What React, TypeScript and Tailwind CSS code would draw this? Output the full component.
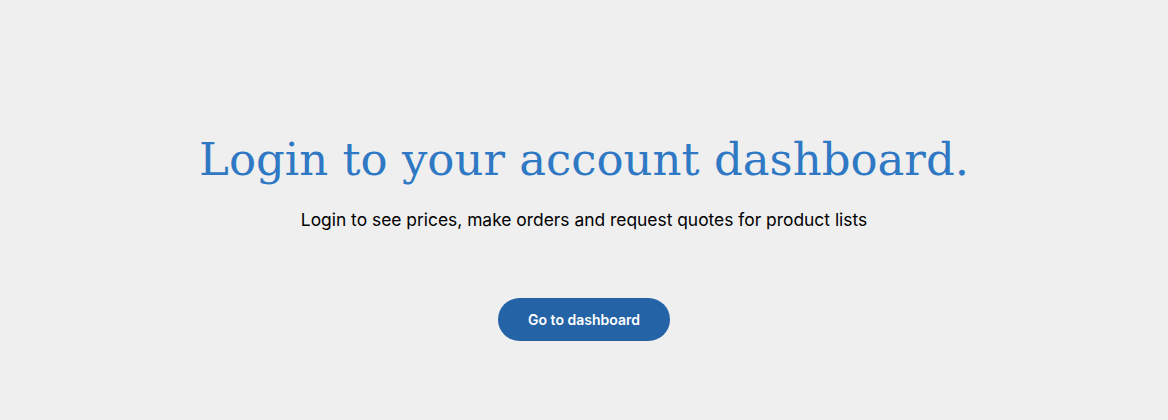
export default function App() {
  return (
    <div className="min-h-[420px] w-full bg-[#efefef] flex flex-col items-center pt-[130px]">
      <h1 className="text-[#2f78c4] text-[45px] leading-[60px] font-['DejaVu_Serif',serif]">
        Login to your account dashboard.
      </h1>
      <p className="mt-[18px] text-[17.4px] leading-[24px] text-black font-['Inter',sans-serif]">
        Login to see prices, make orders and request quotes for product lists
      </p>
      <button className="mt-[66px] h-[43px] w-[172px] rounded-full bg-[#2563a7] text-white text-[14px] font-semibold font-['Inter',sans-serif]">
        Go to dashboard
      </button>
    </div>
  );
}
